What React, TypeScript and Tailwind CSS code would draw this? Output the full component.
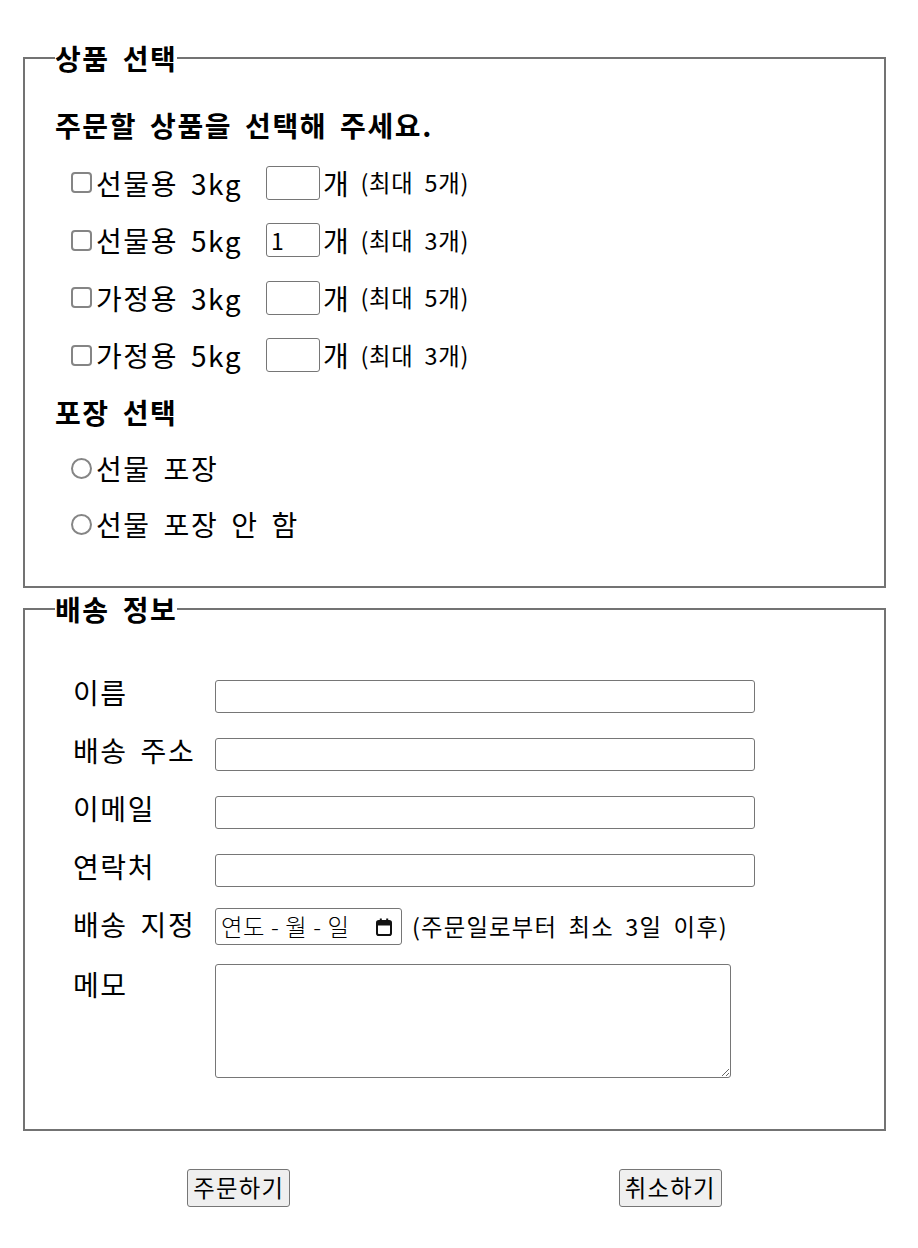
import React from "react";

const products = [
  { name: "선물용 3kg", value: "", max: "(최대 5개)" },
  { name: "선물용 5kg", value: "1", max: "(최대 3개)" },
  { name: "가정용 3kg", value: "", max: "(최대 5개)" },
  { name: "가정용 5kg", value: "", max: "(최대 3개)" },
];

const fields = ["이름", "배송 주소", "이메일", "연락처"];

function CalendarIcon() {
  return (
    <svg width="18" height="20" viewBox="0 0 18 20" fill="none">
      <rect x="2" y="4" width="14" height="14" rx="1.8" stroke="#111" strokeWidth="2" />
      <rect x="2" y="4" width="14" height="4.5" fill="#111" />
      <rect x="4.8" y="1.5" width="2" height="3.5" fill="#111" />
      <rect x="11.2" y="1.5" width="2" height="3.5" fill="#111" />
    </svg>
  );
}

export default function App() {
  return (
    <div className="bg-white w-[918px] min-h-[1248px] pl-[23px] pt-[43px] font-['Noto_Sans_CJK_KR','Noto_Sans_CJK_SC',sans-serif] text-[28px] text-black tracking-[1.6px] [word-spacing:5px]">
      <form className="w-[863px]" onSubmit={(e) => e.preventDefault()}>
        <fieldset className="border-2 border-[#737373] pl-[30px] pt-[23px] pb-[34px]">
          <legend className="font-bold leading-[30px]">상품 선택</legend>

          <div className="h-[58px] flex items-center font-bold">주문할 상품을 선택해 주세요.</div>

          {products.map((p) => (
            <div key={p.name} className="h-[57.5px] flex items-center pl-[16px]">
              <input
                type="checkbox"
                className="appearance-none w-[21px] h-[21px] m-0 mr-[4px] shrink-0 bg-white border-2 border-[#858585] rounded-[4px]"
              />
              <span className="w-[170px] shrink-0">{p.name}</span>
              <input
                type="text"
                defaultValue={p.value}
                className="w-[54px] h-[34px] border border-[#767676] rounded-[3px] px-[4px] text-[23px] outline-none"
              />
              <span className="ml-[3px]">개</span>
              <span className="ml-[10px] text-[23.33px] tracking-[0.8px]">{p.max}</span>
            </div>
          ))}

          <div className="h-[56px] flex items-center font-bold">포장 선택</div>

          {["선물 포장", "선물 포장 안 함"].map((t) => (
            <label key={t} className="h-[56px] flex items-center pl-[16px]">
              <input
                type="radio"
                name="wrap"
                className="appearance-none w-[21px] h-[21px] m-0 mr-[4px] shrink-0 bg-white border-2 border-[#858585] rounded-full"
              />
              <span>{t}</span>
            </label>
          ))}
        </fieldset>

        <fieldset className="mt-[6px] border-2 border-[#737373] pl-[48px] pt-[39px] pb-[51px]">
          <legend className="font-bold leading-[30px] ml-[-18px]">배송 정보</legend>

          {fields.map((f) => (
            <div key={f} className="h-[58px] flex items-center">
              <span className="w-[142px] shrink-0">{f}</span>
              <input
                type="text"
                className="mt-[8px] w-[540px] h-[33px] border border-[#767676] rounded-[3px] px-[4px] text-[23px] outline-none"
              />
            </div>
          ))}

          <div className="h-[58px] flex items-center">
            <span className="w-[142px] shrink-0">배송 지정</span>
            <div className="mt-[5px] w-[187px] h-[37px] border border-[#767676] rounded-[3px] flex items-center pl-[5px] pr-[8px] text-[23.33px] font-light tracking-[0.5px] [word-spacing:0px]">
              <span>연도</span>
              <span className="mx-[6px]">-</span>
              <span>월</span>
              <span className="mx-[6px]">-</span>
              <span>일</span>
              <span className="ml-auto flex">
                <CalendarIcon />
              </span>
            </div>
            <span className="mt-[5px] ml-[10px] text-[23.33px] tracking-[1.2px]">(주문일로부터 최소 3일 이후)</span>
          </div>

          <div className="flex items-start">
            <span className="w-[142px] shrink-0 mt-[16px] leading-[30px]">메모</span>
            <textarea className="mt-[11px] w-[516px] h-[114px] border border-[#767676] rounded-[3px] p-[4px] text-[23px] outline-none resize" />
          </div>
        </fieldset>

        <div className="grid grid-cols-2 justify-items-center mt-[38px]">
          <button
            type="submit"
            className="h-[38px] px-[5px] bg-[#efefef] border border-[#767676] rounded-[3px] text-[23.33px] leading-none tracking-[1.3px] [word-spacing:0px]"
          >
            주문하기
          </button>
          <button
            type="button"
            className="h-[38px] px-[5px] bg-[#efefef] border border-[#767676] rounded-[3px] text-[23.33px] leading-none tracking-[1.3px] [word-spacing:0px]"
          >
            취소하기
          </button>
        </div>
      </form>
    </div>
  );
}
